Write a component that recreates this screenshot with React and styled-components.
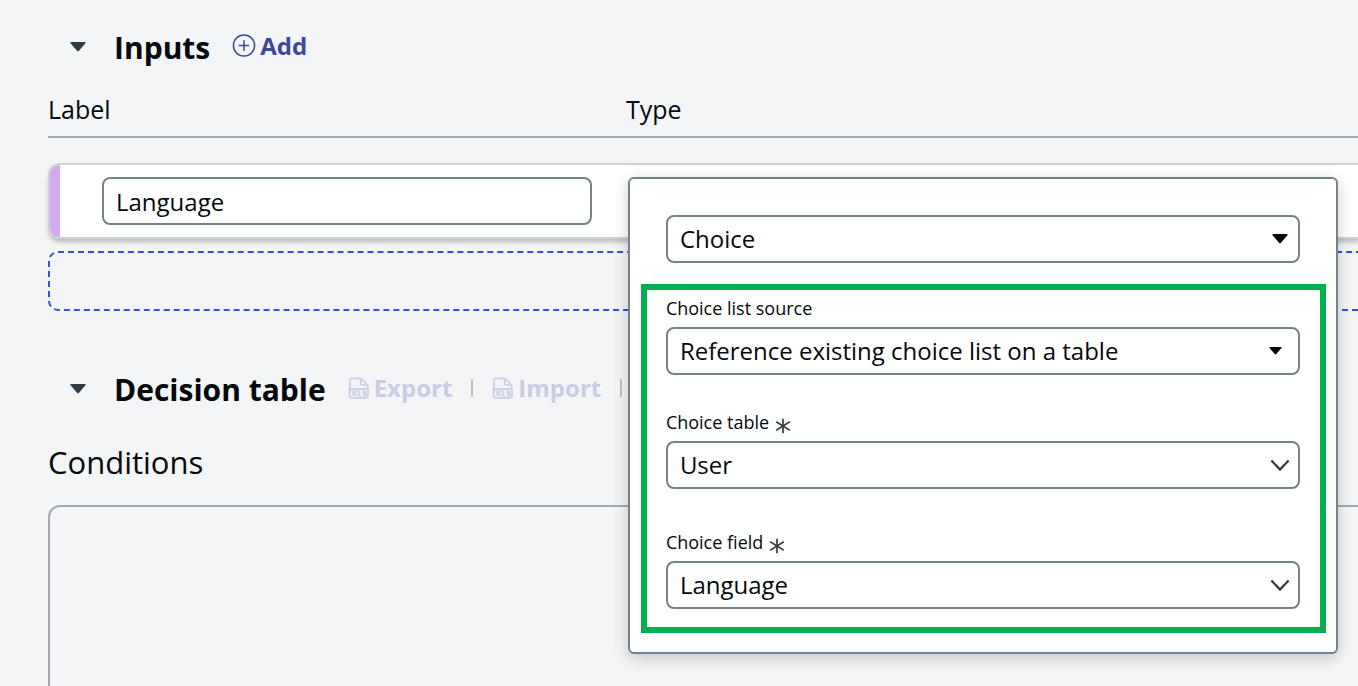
import React from "react";
import styled, { createGlobalStyle } from "styled-components";

const GlobalStyle = createGlobalStyle`
  *, *::before, *::after { box-sizing: border-box; }
  body {
    margin: 0;
    background: #f4f5f7;
    color: #05090c;
    font-family: "Open Sans", "Noto Sans", sans-serif;
    font-size: 24px;
    line-height: 32px;
  }
  h2, h3 { margin: 0; }
`;

const Page = styled.main`
  display: flex;
  flex-direction: column;
  min-height: 100vh;
  padding: 24px 0 0 48px;
`;

const SectionHeader = styled.header`
  display: flex;
  align-items: center;
  height: 48px;
  padding-left: 20px;
`;

const Toggle = styled.button`
  display: flex;
  align-items: center;
  width: 46px;
  height: 32px;
  padding: 0 2px 2px;
  border: 0;
  background: none;
  color: #2f3b42;
`;

const SectionTitle = styled.h2`
  font-size: 30px;
  font-weight: 700;
  line-height: 40px;
`;

const Actions = styled.div`
  display: flex;
  align-items: center;
  gap: 19px;
  padding: 0 0 4px 22px;
`;

const ActionButton = styled.button`
  display: flex;
  align-items: center;
  gap: 4px;
  padding: 0;
  border: 0;
  background: none;
  color: #3d479c;
  font: inherit;
  font-weight: 700;

  &:disabled { color: #c9cce3; }
`;

const Separator = styled.span`
  width: 2px;
  height: 18px;
  background: #c3bfc4;
`;

const ColumnHeads = styled.div`
  display: grid;
  grid-template-columns: 15fr 19fr;
  margin-top: 21px;
  padding-bottom: 11px;
  border-bottom: 2px solid #a0abb1;
  font-size: 25px;
`;

const InputRow = styled.div`
  display: grid;
  grid-template-columns: 7fr 9fr;
  margin: 27px 0 0 2px;
  border-left: 10px solid #d3a9f1;
  border-radius: 10px 0 0 10px;
  background: #fff;
  box-shadow: 0 0 0 2px #cdd1d3, 0 4px 5px 1px rgba(0, 0, 0, 0.25);
`;

const LabelCell = styled.div`
  padding: 12px 36px 12px 42px;
`;

const TypeCell = styled.div`
  position: relative;
`;

const TextInput = styled.input`
  display: block;
  width: 100%;
  height: 48px;
  padding: 0 12px;
  border: 2px solid #74828a;
  border-radius: 8px;
  background: #fff;
  color: inherit;
  font: inherit;
`;

const DropZone = styled.div`
  height: 60px;
  margin-top: 14px;
  border: 2px dashed #3450e0;
  border-right: 0;
  border-radius: 10px 0 0 10px;
`;

const Popover = styled.div`
  position: absolute;
  z-index: 1;
  top: 12px;
  left: 0;
  right: 20px;
  padding: 36px 10px 19px 11px;
  border: 2px solid #74828a;
  border-radius: 6px;
  background: #fff;
  box-shadow: 0 4px 16px rgba(0, 0, 0, 0.2);
`;

const TypeField = styled.div`
  padding: 0 26px 21px 25px;
`;

const ChoiceGroup = styled.div`
  display: flex;
  flex-direction: column;
  padding: 8px 20px 18px 19px;
  border: 6px solid #00b050;
`;

const Field = styled.div`
  & + & { margin-top: 37px; }
  & + & + & { margin-top: 43px; }
`;

const FieldLabel = styled.label`
  display: flex;
  align-items: center;
  gap: 6px;
  height: 20px;
  margin-bottom: 9px;
  font-size: 18px;
  line-height: 20px;

  svg { margin-top: 8px; }
`;

const SelectBox = styled.div`
  position: relative;

  svg {
    position: absolute;
    top: 50%;
    right: ${(p) => p.$inset || 10}px;
    transform: translateY(-50%);
    pointer-events: none;
  }
`;

const Select = styled.select`
  display: block;
  width: 100%;
  height: 48px;
  padding: 0 40px 0 12px;
  border: 2px solid #74828a;
  border-radius: 8px;
  background: #fff;
  color: inherit;
  font: inherit;
  appearance: none;
`;

const SubTitle = styled.h3`
  margin-top: 28px;
  font-size: 31px;
  font-weight: 400;
  line-height: 40px;
`;

const ConditionsPanel = styled.div`
  flex: 1;
  min-height: 180px;
  margin-top: 23px;
  border: 2px solid #a0abb1;
  border-width: 2px 0 0 2px;
  border-radius: 12px 0 0 0;
`;

const DecisionSection = styled.section`
  display: flex;
  flex: 1;
  flex-direction: column;
  margin-top: 55px;
`;

const Caret = ({ width = 16, height = 10 }) => (
  <svg width={width} height={height} viewBox="0 0 16 10" aria-hidden="true">
    <path d="M1 0H15Q16 .3 15.4 1.2L9 8.8Q8 9.8 7 8.8L.6 1.2Q0 .3 1 0Z" fill="currentColor" />
  </svg>
);

const Chevron = () => (
  <svg width="20" height="12" viewBox="0 0 20 12" fill="none" stroke="#2f3b42" strokeWidth="2.2" aria-hidden="true">
    <path d="M1.4 1.4 10 10.6 18.6 1.4" />
  </svg>
);

const Asterisk = () => (
  <svg width="16" height="16" viewBox="0 0 16 16" fill="none" stroke="#3b464c" strokeWidth="1.8" aria-hidden="true">
    <path d="M8 .8V15.2M1.2 3.8 14.8 12.2M14.8 3.8 1.2 12.2" />
  </svg>
);

const PlusCircle = () => (
  <svg width="24" height="24" viewBox="0 0 24 24" fill="none" stroke="currentColor" strokeWidth="1.5" aria-hidden="true">
    <circle cx="12" cy="11.5" r="10.6" />
    <path d="M12 6.3V16.7M6.8 11.5H17.2" />
  </svg>
);

const SheetFile = () => (
  <svg width="22" height="22" viewBox="0 0 22 22" fill="none" stroke="currentColor" strokeWidth="1.7" strokeLinejoin="round" aria-hidden="true">
    <path d="M2 11.6V3.6Q2 1.4 4.2 1.4H13L19.6 8V11.6M12.6 1.6V6.4Q12.6 8 14.2 8H19.4M1.6 12.2H20V19Q20 20.8 18.2 20.8H3.4Q1.6 20.8 1.6 19Z" />
    <path d="M4 13.6 8.4 19M8.4 13.6 4 19M10.6 13.4V18.4H12.8M18 14.6H15.4V16.4H17.8V18.6H15" />
  </svg>
);

const ChoiceField = ({ id, label, required, value, icon, inset }) => (
  <Field>
    <FieldLabel htmlFor={id}>
      {label}
      {required && <Asterisk />}
    </FieldLabel>
    <SelectBox $inset={inset}>
      <Select id={id} defaultValue={value} required={required}>
        <option>{value}</option>
      </Select>
      {icon}
    </SelectBox>
  </Field>
);

export default function App() {
  return (
    <>
      <GlobalStyle />
      <Page>
        <section>
          <SectionHeader>
            <Toggle type="button" aria-label="Collapse inputs"><Caret /></Toggle>
            <SectionTitle>Inputs</SectionTitle>
            <Actions>
              <ActionButton type="button"><PlusCircle />Add</ActionButton>
            </Actions>
          </SectionHeader>
          <ColumnHeads>
            <span id="label-head">Label</span>
            <span id="type-head">Type</span>
          </ColumnHeads>
          <InputRow>
            <LabelCell>
              <TextInput type="text" aria-labelledby="label-head" defaultValue="Language" />
            </LabelCell>
            <TypeCell>
              <Popover>
                <TypeField>
                  <SelectBox $inset={12}>
                    <Select aria-labelledby="type-head" defaultValue="Choice">
                      <option>Choice</option>
                    </Select>
                    <Caret />
                  </SelectBox>
                </TypeField>
                <ChoiceGroup>
                  <ChoiceField
                    id="choice-source"
                    label="Choice list source"
                    value="Reference existing choice list on a table"
                    icon={<Caret width={13} height={9} />}
                    inset={18}
                  />
                  <ChoiceField id="choice-table" label="Choice table" required value="User" icon={<Chevron />} />
                  <ChoiceField id="choice-field" label="Choice field" required value="Language" icon={<Chevron />} />
                </ChoiceGroup>
              </Popover>
            </TypeCell>
          </InputRow>
          <DropZone />
        </section>
        <DecisionSection>
          <SectionHeader>
            <Toggle type="button" aria-label="Collapse decision table"><Caret /></Toggle>
            <SectionTitle>Decision table</SectionTitle>
            <Actions>
              <ActionButton type="button" disabled><SheetFile />Export</ActionButton>
              <Separator />
              <ActionButton type="button" disabled><SheetFile />Import</ActionButton>
              <Separator />
            </Actions>
          </SectionHeader>
          <SubTitle>Conditions</SubTitle>
          <ConditionsPanel />
        </DecisionSection>
      </Page>
    </>
  );
}
